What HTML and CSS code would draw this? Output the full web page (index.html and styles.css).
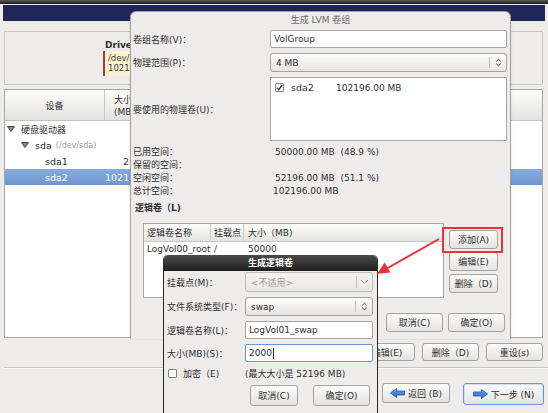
FILE: index.html
```html
<!DOCTYPE html>
<html lang="zh">
<head>
<meta charset="utf-8">
<title>生成 LVM 卷组</title>
<link rel="stylesheet" href="styles.css">
</head>
<body>
<div class="screen">
  <div class="topbar"></div>
  <div class="band"></div>

  <div class="drive-panel">
    <div class="drive-title">Drive</div>
    <div class="drive-box"><div>/dev/s</div><div>10219</div></div>
  </div>

  <div class="devtable">
    <div class="dt-head">
      <div class="dt-c1">设备</div>
      <div class="dt-c2">大小<br>(MB</div>
    </div>
    <div class="dt-row">
      <div class="dt-name lvl0"><svg class="tri" width="8" height="6" viewBox="0 0 8 6"><polygon points="0.5,0.5 7.5,0.5 4,5.5" fill="#8a8a8a" stroke="#444" stroke-width="1"/></svg>硬盘驱动器</div>
    </div>
    <div class="dt-row">
      <div class="dt-name lvl1"><svg class="tri" width="8" height="6" viewBox="0 0 8 6"><polygon points="0.5,0.5 7.5,0.5 4,5.5" fill="#8a8a8a" stroke="#444" stroke-width="1"/></svg>sda <span class="dev">(/dev/sda)</span></div>
    </div>
    <div class="dt-row">
      <div class="dt-name lvl2">sda1</div>
      <div class="dt-size">2</div>
    </div>
    <div class="dt-row selected">
      <div class="dt-name lvl2">sda2</div>
      <div class="dt-size">1021</div>
    </div>
  </div>

  <div class="actions">
    <div class="btn w56">编辑(E)</div>
    <div class="btn w57">删除（D)</div>
    <div class="btn w57">重设(s)</div>
  </div>
  <div class="sep"></div>
  <div class="nav">
    <div class="btn nav-back"><svg width="15" height="10" viewBox="0 0 15 10"><defs><linearGradient id="ab" x1="0" y1="0" x2="0" y2="1"><stop offset="0" stop-color="#6aa3ea"/><stop offset="1" stop-color="#2a64c4"/></linearGradient></defs><polygon points="0.5,5 6.5,0.5 6.5,3 14.5,3 14.5,7 6.5,7 6.5,9.5" fill="url(#ab)" stroke="#1f58b3" stroke-width="0.8"/></svg>返回 (B)</div>
    <div class="btn nav-next"><svg width="15" height="10" viewBox="0 0 15 10"><defs><linearGradient id="an" x1="0" y1="0" x2="0" y2="1"><stop offset="0" stop-color="#6aa3ea"/><stop offset="1" stop-color="#2a64c4"/></linearGradient></defs><polygon points="14.5,5 8.5,0.5 8.5,3 0.5,3 0.5,7 8.5,7 8.5,9.5" fill="url(#an)" stroke="#1f58b3" stroke-width="0.8"/></svg>下一步 (N)</div>
  </div>

  <!-- LVM volume group dialog -->
  <div class="lvm">
    <div class="lvm-title">生成 LVM 卷组</div>
    <div class="lvm-form">
      <div class="lbl">卷组名称(V)：</div>
      <div class="entry">VolGroup</div>
      <div class="lbl">物理范围(P)：</div>
      <div class="combo h19">
        <div class="combo-text">4 MB</div>
        <div class="combo-sep"></div>
        <div class="combo-arrow"><svg width="7" height="9" viewBox="0 0 7 9"><path d="M1.2 3.4 L3.5 1.2 L5.8 3.4 M1.2 5.6 L3.5 7.8 L5.8 5.6" fill="none" stroke="#555" stroke-width="1"/></svg></div>
      </div>
      <div class="lbl">要使用的物理卷(U)：</div>
      <div class="pvlist">
        <div class="pv-row"><span class="cb checked"><svg width="7" height="7" viewBox="0 0 7 7"><path d="M1 3.6 L2.8 5.6 L6.2 1" fill="none" stroke="#333" stroke-width="1.3"/></svg></span><span class="pv-name">sda2</span><span>102196.00 MB</span></div>
      </div>
    </div>
    <div class="lvm-info">
      <div class="lbl">已用空间：</div><div class="val">50000.00 MB &nbsp;(48.9 %)</div>
      <div class="lbl">保留的空间：</div><div class="val"></div>
      <div class="lbl">空闲空间：</div><div class="val">52196.00 MB &nbsp;(51.1 %)</div>
      <div class="lbl">总计空间：</div><div class="val total">102196.00 MB</div>
    </div>
    <div class="lvm-lvtitle">逻辑卷（L)</div>
    <div class="lvm-lv">
      <div class="lvtable">
        <div class="lv-head">
          <div class="lv-c1">逻辑卷名称</div>
          <div class="lv-c2">挂载点</div>
          <div class="lv-c3">大小（MB)</div>
        </div>
        <div class="lv-row">
          <div class="lv-c1">LogVol00_root</div>
          <div class="lv-c2">/</div>
          <div class="lv-c3">50000</div>
        </div>
      </div>
      <div class="lv-buttons">
        <div class="btn side">添加(A)</div>
        <div class="btn side">编辑(E)</div>
        <div class="btn side">删除（D)</div>
      </div>
    </div>
    <div class="lvm-bottom">
      <div class="btn w57 h19">取消(C)</div>
      <div class="btn w57 h19">确定(O)</div>
    </div>
  </div>

  <!-- Logical volume dialog -->
  <div class="sd">
    <div class="sd-title">生成逻辑卷</div>
    <div class="sd-form">
      <div class="lbl">挂载点(M)：</div>
      <div class="combo h20 disabled">
        <div class="combo-text">&lt;不适用&gt;</div>
        <div class="combo-sep"></div>
        <div class="combo-arrow wide"><svg width="9" height="6" viewBox="0 0 9 6"><path d="M1 1 L4.5 4.5 L8 1" fill="none" stroke="#9a9896" stroke-width="1"/></svg></div>
      </div>
      <div class="lbl">文件系统类型(F)：</div>
      <div class="combo h19">
        <div class="combo-text">swap</div>
        <div class="combo-sep"></div>
        <div class="combo-arrow"><svg width="7" height="9" viewBox="0 0 7 9"><path d="M1.2 3.4 L3.5 1.2 L5.8 3.4 M1.2 5.6 L3.5 7.8 L5.8 5.6" fill="none" stroke="#555" stroke-width="1"/></svg></div>
      </div>
      <div class="lbl">逻辑卷名称(L)：</div>
      <div class="entry">LogVol01_swap</div>
      <div class="lbl">大小(MB)(S)：</div>
      <div class="entry focus">2000<span class="caret"></span></div>
    </div>
    <div class="sd-check">
      <div class="sd-checklbl"><span class="cb"></span>加密（E)</div>
      <div>(最大大小是 52196 MB)</div>
    </div>
    <div class="sd-bottom">
      <div class="btn w48 h21">取消(C)</div>
      <div class="btn w57 h21">确定(O)</div>
    </div>
  </div>

  <!-- annotations -->
  <div class="redbox"></div>
  <svg class="arrow" width="80" height="50" viewBox="0 0 80 50">
    <line x1="69" y1="9" x2="16" y2="39" stroke="#e6343b" stroke-width="2"/>
    <polygon points="7,44 20.4,42.6 14.6,32.6" fill="#e6343b"/>
  </svg>
</div>
</body>
</html>
```

FILE: styles.css
```css
* { box-sizing: border-box; }
html, body { margin: 0; padding: 0; }
body {
  background: #edeceb;
  font-family: "DejaVu Sans", "Noto Sans CJK SC", sans-serif;
  font-size: 9px;
  color: #2f2f2f;
}
.screen {
  position: relative;
  width: 548px;
  height: 413px;
  overflow: hidden;
  background: #edeceb;
}
.topbar { height: 4px; background: linear-gradient(#5a5a5a, #1a1a1a); }
.band { height: 16px; margin: 1px 3px 0; background: #1f2759; }

/* drive panel */
.drive-panel {
  height: 54px;
  margin: 10px 5px 0 4px;
  border: 1px solid #c8c6c2;
  padding-left: 98px;
}
.drive-title { font-weight: bold; margin-top: 7px; padding-left: 2px; height: 12px; line-height: 12px; }
.drive-box {
  width: 27px;
  height: 25px;
  background: #fbf3cf;
  border-left: 2px solid #a83a2e;
  padding: 3px 0 0 3px;
  font-size: 8.5px;
  line-height: 9.5px;
  white-space: nowrap;
  color: #3a3a3a;
}

/* device table */
.devtable {
  height: 249px;
  margin: 4px 5px 0 4px;
  border: 1px solid #a9a7a3;
  background: #fff;
}
.dt-head {
  display: flex;
  height: 31px;
  background: linear-gradient(#fdfdfd, #e3e2df);
  border-bottom: 1px solid #c4c2be;
}
.dt-c1 {
  width: 100px;
  border-right: 1px solid #cac8c4;
  display: flex;
  align-items: center;
  justify-content: center;
}
.dt-c2 { padding: 4px 0 0 9px; line-height: 12px; white-space: nowrap; }
.dt-row { display: flex; height: 16px; align-items: center; }
.dt-row.selected { background: linear-gradient(#86abdd, #6f97d0); color: #fff; }
.dt-name { width: 100px; display: flex; align-items: center; white-space: nowrap; }
.lvl0 { padding-left: 2px; }
.lvl1 { padding-left: 16px; font-size: 9.5px; }
.lvl2 { padding-left: 40px; font-size: 9.5px; }
.tri { margin-right: 6px; }
.dev { color: #9a9a9a; font-size: 8px; margin-left: 4px; }
.dt-size { width: 24px; text-align: right; font-size: 9.5px; white-space: nowrap; }

/* buttons */
.btn {
  display: flex;
  align-items: center;
  justify-content: center;
  height: 18px;
  border: 1px solid #a5a39f;
  border-radius: 3px;
  background: linear-gradient(#fbfbfa, #e4e3e0);
  white-space: nowrap;
  color: #2f2f2f;
}
.w48 { width: 48px; }
.w56 { width: 56px; }
.w57 { width: 57px; }
.h19 { height: 19px; }
.h20 { height: 20px; }
.h21 { height: 21px; }

.actions {
  display: flex;
  justify-content: flex-end;
  gap: 7px;
  margin-top: 5px;
  padding-right: 5px;
}
.sep {
  margin: 6px 0 0 4px;
  height: 2px;
  border-top: 1px solid #c6c4c0;
  border-bottom: 1px solid #fafaf9;
}
.nav {
  display: flex;
  justify-content: flex-end;
  align-items: flex-start;
  gap: 13px;
  margin-top: 14px;
  padding-right: 4px;
}
.nav-back { width: 68px; height: 20px; gap: 3px; }
.nav-next {
  width: 81px; height: 22px; gap: 3px;
  border-color: #6f97d0;
  box-shadow: inset 0 0 0 1px #d3e0f2;
}

/* LVM dialog */
.lvm {
  position: absolute;
  left: 130px;
  top: 11px;
  width: 381px;
  height: 328px;
  background: #edeceb;
  border: 1px solid #a4a29e;
  border-bottom: none;
  border-radius: 6px 6px 0 0;
  box-shadow: 0 0 2px rgba(0,0,0,0.15);
}
.lvm-title {
  height: 17px;
  line-height: 17px;
  text-align: center;
  color: #6b6b6b;
}
.lvm-form {
  display: grid;
  grid-template-columns: 137px 237px;
  row-gap: 5px;
  padding: 1px 0 0 2px;
  align-items: center;
}
.entry {
  height: 18px;
  background: #fff;
  border: 1px solid #a9a7a3;
  border-radius: 2px;
  padding-left: 3px;
  display: flex;
  align-items: center;
  white-space: nowrap;
}
.entry.focus { border-color: #6d98d3; }
.caret { display: inline-block; width: 1px; height: 11px; background: #222; margin-left: 1px; }
.combo {
  display: flex;
  align-items: stretch;
  border: 1px solid #a5a39f;
  border-radius: 3px;
  background: linear-gradient(#fcfcfb, #e6e5e2);
}
.combo-text { flex: 1; display: flex; align-items: center; padding-left: 5px; white-space: nowrap; }
.combo-sep { width: 1px; background: #c3c1bd; margin: 3px 0; }
.combo-arrow { width: 16px; display: flex; align-items: center; justify-content: center; }
.combo-arrow.wide { width: 15px; }
.combo.disabled { background: linear-gradient(#f3f2f1, #e9e8e6); border-color: #bdbbb7; color: #9d9b98; }
.pvlist {
  height: 64px;
  background: #fff;
  border: 1px solid #a9a7a3;
  padding: 3px 0 0 4px;
}
.pv-row { display: flex; align-items: center; height: 13px; }
.cb {
  display: inline-flex;
  align-items: center;
  justify-content: center;
  width: 9px;
  height: 9px;
  border: 1px solid #86847f;
  border-radius: 1px;
  background: #fff;
  margin-right: 7px;
}
.pv-name { width: 45px; font-size: 9.5px; }

.lvm-info {
  display: grid;
  grid-template-columns: 137px 1fr;
  margin-top: 5px;
  padding-left: 2px;
}
.lvm-info > div { height: 13px; line-height: 13px; }
.lvm-info .val { padding-left: 5px; white-space: nowrap; }
.lvm-info .val.total { padding-left: 3px; }
.lvm-lvtitle {
  font-weight: bold;
  margin: 4px 0 0 4px;
  height: 13px;
  line-height: 13px;
}
.lvm-lv {
  display: flex;
  gap: 5px;
  margin-top: 8px;
  padding-left: 12px;
}
.lvtable {
  width: 301px;
  height: 75px;
  background: #fff;
  border: 1px solid #a9a7a3;
}
.lv-head {
  display: flex;
  height: 18px;
  background: linear-gradient(#fdfdfd, #e4e3e0);
  border-bottom: 1px solid #c9c7c3;
}
.lv-head > div { display: flex; align-items: center; border-right: 1px solid #cac8c4; }
.lv-row { display: flex; height: 14px; align-items: center; }
.lv-c1 { width: 67px; padding-left: 3px; white-space: nowrap; }
.lv-c2 { width: 33px; padding-left: 3px; }
.lv-c3 { padding-left: 4px; }
.lv-head .lv-c3 { border-right: none; }
.lv-buttons {
  display: flex;
  flex-direction: column;
  gap: 3px;
  padding-top: 7px;
}
.btn.side { width: 49px; height: 19px; }
.lvm-bottom {
  display: flex;
  justify-content: flex-end;
  gap: 5px;
  margin-top: 15px;
  padding-right: 5px;
}

/* logical volume dialog */
.sd {
  position: absolute;
  left: 163px;
  top: 255px;
  width: 215px;
  height: 170px;
  background: #edeceb;
  border: 1px solid #262626;
  border-top: none;
  border-radius: 5px 5px 0 0;
  overflow: hidden;
}
.sd-title {
  height: 16px;
  line-height: 16px;
  margin: 0 -1px;
  background: linear-gradient(#4a4a4a, #1f1f1f);
  border-radius: 5px 5px 0 0;
  color: #fff;
  font-weight: bold;
  text-align: center;
}
.sd-form {
  display: grid;
  grid-template-columns: 78px 128px;
  row-gap: 5px;
  align-items: center;
  padding: 1px 0 0 3px;
}
.sd-check {
  display: grid;
  grid-template-columns: 78px 128px;
  align-items: center;
  height: 14px;
  margin-top: 4px;
  padding-left: 3px;
}
.sd-checklbl { display: flex; align-items: center; padding-left: 1px; }
.sd-checklbl .cb { margin-right: 6px; }
.sd-bottom {
  display: flex;
  justify-content: flex-end;
  gap: 15px;
  margin-top: 5px;
  padding-right: 7px;
}

/* annotations */
.redbox {
  position: absolute;
  left: 442px;
  top: 227px;
  width: 61px;
  height: 26px;
  border: 2px solid #e6343b;
}
.arrow {
  position: absolute;
  left: 370px;
  top: 230px;
}
```
